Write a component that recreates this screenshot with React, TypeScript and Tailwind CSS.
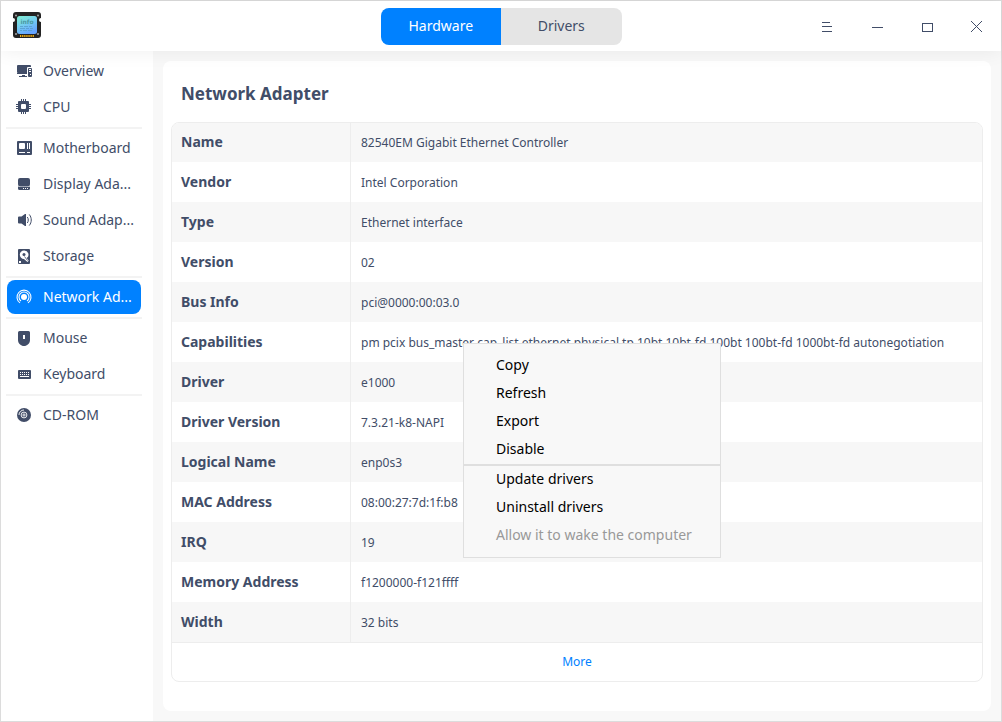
import React from "react";

type IconProps = { children: React.ReactNode };

function Glyph({ children }: IconProps) {
  return (
    <svg viewBox="0 0 16 16" className="size-4 shrink-0" fill="currentColor" aria-hidden="true">
      {children}
    </svg>
  );
}

const OverviewIcon = () => (
  <Glyph>
    <path d="M2 2h12a1 1 0 0 1 1 1v1h-3a1 1 0 0 0-1 1v5H2a1 1 0 0 1-1-1V3a1 1 0 0 1 1-1z" />
    <path d="M1 10h10v1H1zM6 12h3v1H6zM3 13h8v1H3z" />
    <path fillRule="evenodd" d="M13 5h2a1 1 0 0 1 1 1v7a1 1 0 0 1-1 1h-2a1 1 0 0 1-1-1V6a1 1 0 0 1 1-1zm0 1v1h2V6zm0 2v1h2V8zm1 3v1h1v-1z" />
  </Glyph>
);

const CpuIcon = () => (
  <Glyph>
    <path fillRule="evenodd" d="M3 2h9a1 1 0 0 1 1 1v9a1 1 0 0 1-1 1H3a1 1 0 0 1-1-1V3a1 1 0 0 1 1-1zm3 3a1 1 0 0 0-1 1v3a1 1 0 0 0 1 1h3a1 1 0 0 0 1-1V6a1 1 0 0 0-1-1z" />
    <path d="M5 0h1v3H5zM7 0h1v3H7zM9 0h1v3H9zM5 12h1v3H5zM7 12h1v3H7zM9 12h1v3H9zM0 5h3v1H0zM0 7h3v1H0zM0 9h3v1H0zM12 5h3v1h-3zM12 7h3v1h-3zM12 9h3v1h-3z" />
  </Glyph>
);

const MotherboardIcon = () => (
  <Glyph>
    <path fillRule="evenodd" d="M2 1h13a1 1 0 0 1 1 1v12a1 1 0 0 1-1 1H2a1 1 0 0 1-1-1V2a1 1 0 0 1 1-1zm2 2a1 1 0 0 0-1 1v4a1 1 0 0 0 1 1h4a1 1 0 0 0 1-1V4a1 1 0 0 0-1-1zm7 0v6h1V3zm2 0v6h1V3zM3 12v1h6v-1zm8 0v1h3v-1z" />
  </Glyph>
);

const DisplayIcon = () => (
  <Glyph>
    <path d="M4 2h8a2 2 0 0 1 2 2v4a2.500 2.500 0 0 1-2.500 2.500h-7A2.500 2.500 0 0 1 2 8V4a2 2 0 0 1 2-2z" />
    <path fillRule="evenodd" d="M2 10.300c.8.700 1.600.7 2.500.7h7c.9 0 1.700 0 2.500-.7V12.500A1.500 1.500 0 0 1 12.500 14h-9A1.500 1.500 0 0 1 2 12.500zM7 12v1h1v-1zm2 0v1h1v-1zm2 0v1h1v-1z" />
  </Glyph>
);

const SoundIcon = () => (
  <Glyph>
    <path d="M3 4.500h2.500L9 2h1v12H9l-3.500-2.500H3a1 1 0 0 1-1-1v-5a1 1 0 0 1 1-1z" />
    <path d="M11.300 5c1.300 1.700 1.300 4.300 0 6M13.300 2.500c2.600 3.200 2.600 7.800 0 11" fill="none" stroke="currentColor" />
  </Glyph>
);

const StorageIcon = () => (
  <Glyph>
    <path fillRule="evenodd" d="M3 1h10a1 1 0 0 1 1 1v13a1 1 0 0 1-1 1H3a1 1 0 0 1-1-1V2a1 1 0 0 1 1-1zm5 1.500a4.200 4.200 0 1 0 0 8.400l3.500 3.100 1.200-1.200-2-2.700A4.200 4.200 0 0 0 8 2.500z" />
    <path d="M8 5a1.500 1.500 0 1 1 0 3A1.500 1.500 0 0 1 8 5z" />
    <path d="M8.500 8.500l3 4" stroke="currentColor" strokeWidth=".8" />
    <path d="M3 13h2v2H3z" fill="#fff" />
  </Glyph>
);

const NetworkIcon = () => (
  <Glyph>
    <circle cx="8" cy="8" r="3" />
    <path d="M5 12A5 5 0 1 1 11 12M4 13.900A7 7 0 1 1 12 13.900" fill="none" stroke="currentColor" strokeWidth="1.100" />
  </Glyph>
);

const MouseIcon = () => (
  <Glyph>
    <path fillRule="evenodd" d="M3.500 1h9A1.500 1.500 0 0 1 14 2.500V10c0 3.500-3 6-6 6s-6-2.500-6-6V2.500A1.500 1.500 0 0 1 3.500 1zM7 5v4h2V5z" />
  </Glyph>
);

const KeyboardIcon = () => (
  <Glyph>
    <path fillRule="evenodd" d="M3 4h11a1 1 0 0 1 1 1v7a1 1 0 0 1-1 1H3a1 1 0 0 1-1-1V5a1 1 0 0 1 1-1zm1 2v1h1V6zm2 0v1h1V6zm2 0v1h1V6zm2 0v1h1V6zm2 0v1h1V6zM4 8v1h1V8zm2 0v1h1V8zm2 0v1h1V8zm2 0v1h1V8zm2 0v1h1V8zm-8 2v1h9v-1z" />
  </Glyph>
);

const DiscIcon = () => (
  <Glyph>
    <circle cx="8" cy="8" r="7" />
    <g fill="none" stroke="#fff" strokeWidth=".9">
      <circle cx="8" cy="8" r="2.900" />
      <circle cx="8" cy="8" r="1.100" />
      <path d="M3 8a5 5 0 0 1 5-5" />
    </g>
  </Glyph>
);

const groups = [
  [
    { label: "Overview", Icon: OverviewIcon },
    { label: "CPU", Icon: CpuIcon },
  ],
  [
    { label: "Motherboard", Icon: MotherboardIcon },
    { label: "Display Ada...", Icon: DisplayIcon },
    { label: "Sound Adap...", Icon: SoundIcon },
    { label: "Storage", Icon: StorageIcon },
  ],
  [{ label: "Network Ad...", Icon: NetworkIcon, active: true }],
  [
    { label: "Mouse", Icon: MouseIcon },
    { label: "Keyboard", Icon: KeyboardIcon },
  ],
  [{ label: "CD-ROM", Icon: DiscIcon }],
];

const details = [
  ["Name", "82540EM Gigabit Ethernet Controller"],
  ["Vendor", "Intel Corporation"],
  ["Type", "Ethernet interface"],
  ["Version", "02"],
  ["Bus Info", "pci@0000:00:03.0"],
  ["Capabilities", "pm pcix bus_master cap_list ethernet physical tp 10bt 10bt-fd 100bt 100bt-fd 1000bt-fd autonegotiation"],
  ["Driver", "e1000"],
  ["Driver Version", "7.3.21-k8-NAPI"],
  ["Logical Name", "enp0s3"],
  ["MAC Address", "08:00:27:7d:1f:b8"],
  ["IRQ", "19"],
  ["Memory Address", "f1200000-f121ffff"],
  ["Width", "32 bits"],
];

const windowControls = [
  { name: "Menu", path: "M21 21.500h8M21 25.500h10M21 30.500h10" },
  { name: "Minimize", path: "M21 26.500h11" },
  { name: "Maximize", path: "M21.500 22.500h10v8h-10z" },
  { name: "Close", path: "M20 20l11 11M31 20l-11 11" },
];

function Logo() {
  return (
    <svg viewBox="0 0 28 28" className="size-7" aria-hidden="true">
      <defs>
        <linearGradient id="screen" x1="0" y1="0" x2=".5" y2="1">
          <stop offset="0" stopColor="#7ff0cf" />
          <stop offset=".5" stopColor="#76cfef" />
          <stop offset="1" stopColor="#65a4ff" />
        </linearGradient>
      </defs>
      <path d="M3 0h22a3 3 0 0 1 3 3v3a2 2 0 0 0 0 4v13a3 3 0 0 1-3 3H3a3 3 0 0 1-3-3V10a2 2 0 0 0 0-4V3a3 3 0 0 1 3-3z" fill="#232323" />
      <g fill="#a6a6a6">
        <circle cx="3" cy="3.500" r="1" />
        <circle cx="25" cy="3.500" r="1" />
        <circle cx="3" cy="22" r="1" />
        <circle cx="25" cy="22" r="1" />
      </g>
      <rect x="4" y="4" width="20" height="18" rx="2.500" fill="url(#screen)" />
      <text x="14" y="12" textAnchor="middle" fontFamily="DejaVu Sans" fontWeight="700" fontSize="6" fill="#4a9aa3">info</text>
      <path d="M7 14.500h3m1 0h4m1 0h3M7 16.500h5m1 0h3m1 0h3M7 18.500h2m1 0h4m1 0h4" stroke="#559ccc" strokeWidth=".8" />
      <path d="M7 24h14" stroke="#f5ad0b" strokeWidth="2" strokeDasharray="1.300 .8" />
    </svg>
  );
}

function ContextMenu() {
  const item = "block h-7 w-full pl-8 text-left whitespace-nowrap";
  return (
    <div role="menu" className="absolute top-[342px] left-[462px] z-20 w-[258px] border border-[#dfdfdf] bg-[#f8f8f8] pt-2 pb-2 text-sm text-black">
      <div className="-mt-px pb-px">
        {["Copy", "Refresh", "Export", "Disable"].map((label) => (
          <button key={label} role="menuitem" className={item}>{label}</button>
        ))}
      </div>
      <div role="separator" className="h-0.5 bg-[#dfdfdf]" />
      <div className="-mt-px">
        {["Update drivers", "Uninstall drivers"].map((label) => (
          <button key={label} role="menuitem" className={item}>{label}</button>
        ))}
        <button role="menuitem" disabled className="block h-7 w-full pl-8 text-left whitespace-nowrap text-[#999999]">
          Allow it to wake the computer
        </button>
      </div>
    </div>
  );
}

export default function App() {
  return (
    <div className="relative flex min-h-screen flex-col border border-[#dcdcdc] bg-white font-['Noto_Sans',sans-serif] text-sm text-[#414d68]">
      <header className="relative z-10 grid h-[50px] grid-cols-[1fr_auto_1fr] items-center bg-white shadow-[0_0_20px_rgba(0,0,0,0.07)]">
        <div className="pl-3">
          <Logo />
        </div>
        <div className="flex h-[37px] w-[241px] overflow-hidden rounded-lg">
          <button className="flex-1 bg-[#0081ff] text-white">Hardware</button>
          <button className="flex-1 bg-[#e5e5e5]">Drivers</button>
        </div>
        <div className="flex justify-end">
          {windowControls.map(({ name, path }) => (
            <button key={name} aria-label={name} className="size-[50px]">
              <svg viewBox="0 0 50 50" className="size-full" fill="none" stroke="currentColor" shapeRendering="crispEdges" aria-hidden="true">
                <path d={path} />
              </svg>
            </button>
          ))}
        </div>
      </header>

      <div className="flex flex-1">
        <nav className="w-[152px] shrink-0 pt-[3px] pr-[11px] pl-[5px]">
          {groups.map((group, index) => (
            <div key={index}>
              {index > 0 && <div className="mt-[3px] mb-0.5 h-0.5 bg-[#f3f3f3]" />}
              <div className="flex flex-col gap-0.5 pr-px pl-px">
                {group.map(({ label, Icon, ...rest }) => (
                  <button
                    key={label}
                    className={
                      "active" in rest
                        ? "flex h-[34px] items-center gap-[11px] rounded-lg bg-[#0081ff] pl-[9px] whitespace-nowrap text-white"
                        : "flex h-[34px] items-center gap-[11px] rounded-lg pl-[9px] whitespace-nowrap"
                    }
                  >
                    <Icon />
                    {label}
                  </button>
                ))}
              </div>
            </div>
          ))}
        </nav>

        <main className="flex min-w-0 flex-1 bg-[#f8f8f8] p-2.5">
          <section className="min-w-0 flex-1 rounded-lg bg-white px-2">
            <h1 className="h-[61px] pt-[21px] pl-2.5 text-[17px] leading-6 font-bold">Network Adapter</h1>
            <div className="overflow-hidden rounded-lg border border-[#ededed]">
              <table className="-mt-px w-full table-fixed border-separate border-spacing-0">
                <tbody>
                  {details.map(([name, value]) => (
                    <tr key={name} className="h-10 odd:bg-[#f7f7f7]">
                      <th scope="row" className="w-[179px] border-r border-[#ededed] pl-[9px] text-left font-bold">{name}</th>
                      <td className="pt-0.5 pl-2.5 text-xs">{value}</td>
                    </tr>
                  ))}
                </tbody>
              </table>
              <button className="block h-[39px] w-full border-t border-[#ededed] text-xs text-[#0081ff]">More</button>
            </div>
          </section>
        </main>
      </div>

      <ContextMenu />
    </div>
  );
}
